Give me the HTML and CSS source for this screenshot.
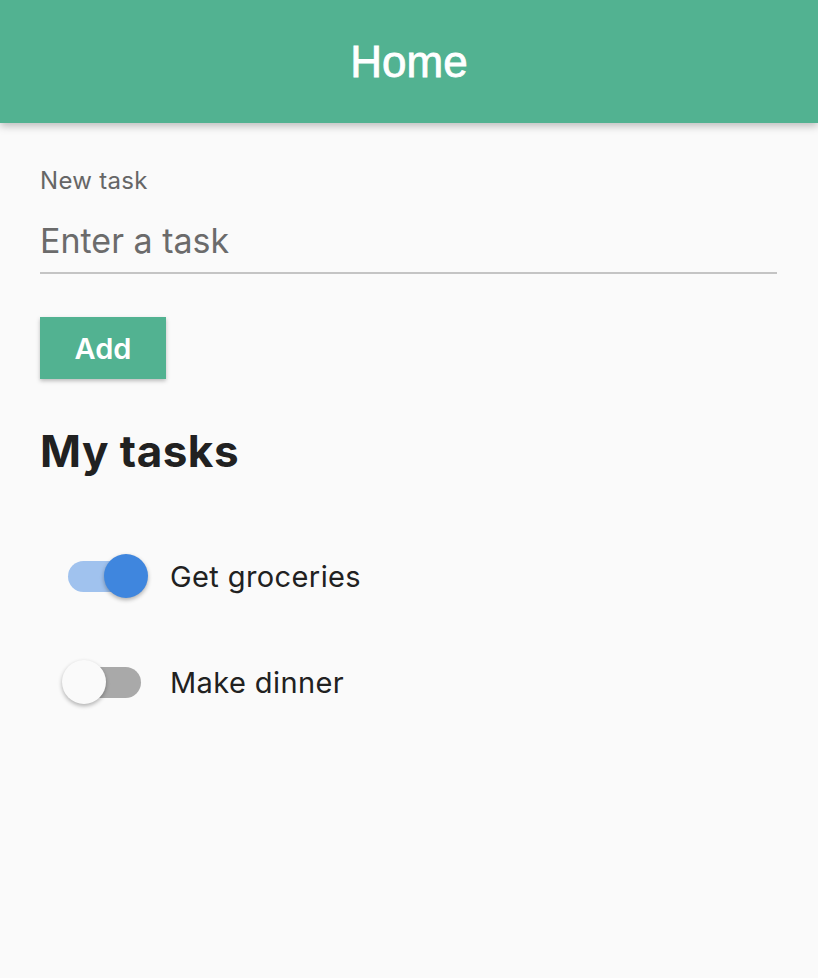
FILE: index.html
```html
<!DOCTYPE html>
<html>
<head>
<meta charset="utf-8">
<link rel="stylesheet" href="styles.css">
</head>
<body>
<header class="appbar"><h1 class="appbar-title">Home</h1></header>
<main class="content">
  <div class="field">
    <label class="field-label">New task</label>
    <div class="field-input">Enter a task</div>
  </div>
  <button class="add-btn">Add</button>
  <h2 class="section-title">My tasks</h2>
  <ul class="tasks">
    <li class="task">
      <span class="switch on"><span class="track"></span><span class="thumb"></span></span>
      <span class="task-text">Get groceries</span>
    </li>
    <li class="task">
      <span class="switch"><span class="track"></span><span class="thumb"></span></span>
      <span class="task-text">Make dinner</span>
    </li>
  </ul>
</main>
</body>
</html>
```
FILE: styles.css
```css
html, body {
  margin: 0;
  padding: 0;
  background: #fafafa;
  height: 100%;
}
body {
  font-family: Inter, "Noto Sans", sans-serif;
  color: #212121;
}
.appbar {
  height: 123px;
  background: #52b291;
  display: flex;
  align-items: center;
  justify-content: center;
  box-shadow: 0 3px 8px rgba(0,0,0,0.25);
  position: relative;
}
.appbar-title {
  margin: 0;
  font-family: "Liberation Sans", Arial, sans-serif;
  font-weight: 400;
  font-size: 44px;
  color: #fff;
  -webkit-text-stroke: 0.8px #fff;
}
.content {
  padding: 0 41px 0 40px;
}
.field {
  padding-top: 43px;
}
.field-label {
  display: block;
  font-size: 24px;
  line-height: 30px;
  letter-spacing: 0.3px;
  color: #666;
}
.field-input {
  font-size: 34px;
  line-height: 40px;
  color: #6b6b6b;
  padding: 25px 0 11px;
  border-bottom: 2px solid #c4c4c4;
}
.add-btn {
  margin-top: 43px;
  width: 126px;
  height: 62px;
  border: none;
  background: #52b291;
  color: #fff;
  font-family: Inter, "Noto Sans", sans-serif;
  font-weight: 600;
  font-size: 29px;
  box-shadow: 0 2px 4px rgba(0,0,0,0.25);
  padding: 0;
}
.section-title {
  margin: 44px 0 0;
  font-size: 44px;
  line-height: 56px;
  font-weight: 700;
  letter-spacing: 0.5px;
  color: #212121;
}
.tasks {
  list-style: none;
  margin: 44px 0 0;
  padding: 0;
}
.task {
  display: flex;
  align-items: center;
  height: 106px;
}
.switch {
  position: relative;
  width: 73px;
  height: 44px;
  margin-left: 28px;
  flex: none;
}
.track {
  position: absolute;
  left: 0;
  top: 6.5px;
  width: 73px;
  height: 31px;
  border-radius: 16px;
  background: #a9a9a9;
}
.thumb {
  position: absolute;
  top: 0;
  left: -6px;
  width: 44px;
  height: 44px;
  border-radius: 50%;
  background: #fafafa;
  box-shadow: 0 2px 4px rgba(0,0,0,0.3);
}
.switch.on .track {
  background: #a0c2ee;
}
.switch.on .thumb {
  left: 36px;
  background: #3f86de;
}
.task-text {
  margin-left: 29px;
  font-size: 29px;
  letter-spacing: 0.4px;
  color: #212121;
}
```
